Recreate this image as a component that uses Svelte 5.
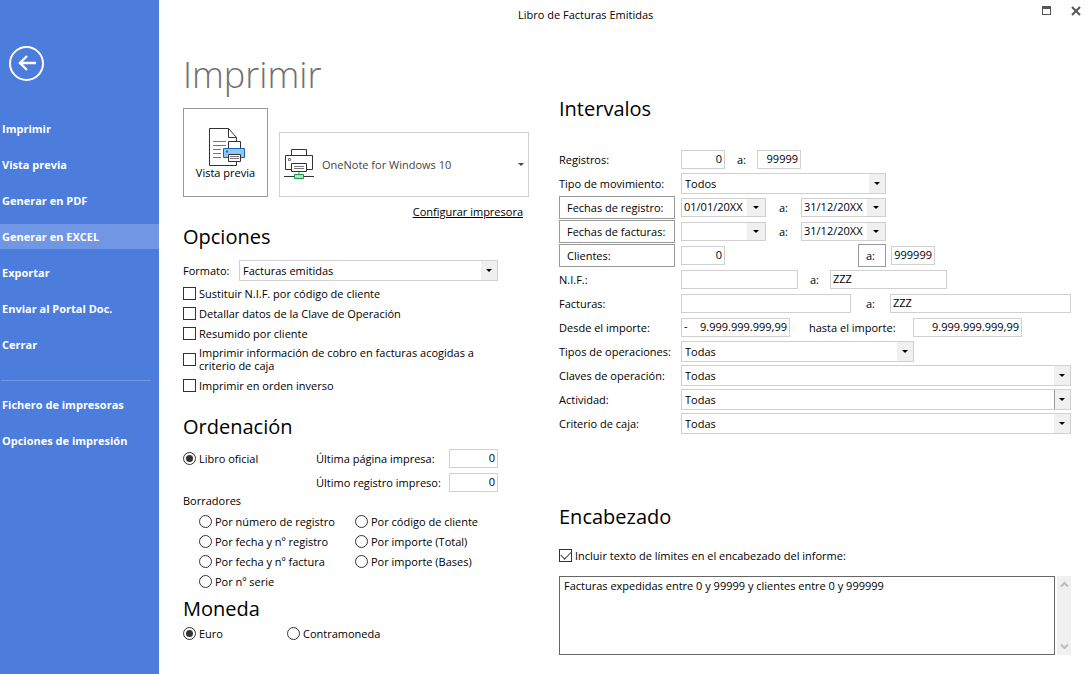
<script>
  const nav = ['Imprimir', 'Vista previa', 'Generar en PDF', 'Generar en EXCEL', 'Exportar', 'Enviar al Portal Doc.', 'Cerrar'];
  const tools = ['Fichero de impresoras', 'Opciones de impresión'];
  const active = 'Generar en EXCEL';
  const checks = [
    'Sustituir N.I.F. por código de cliente',
    'Detallar datos de la Clave de Operación',
    'Resumido por cliente',
    'Imprimir información de cobro en facturas acogidas a criterio de caja',
    'Imprimir en orden inverso'
  ];
  const drafts = [
    ['Por número de registro', 'Por código de cliente'],
    ['Por fecha y nº registro', 'Por importe (Total)'],
    ['Por fecha y nº factura', 'Por importe (Bases)'],
    ['Por nº serie']
  ];
  let order = $state('Libro oficial');
  let currency = $state('Euro');
  const lists = [
    ['claves', 'Claves de operación:'],
    ['actividad', 'Actividad:'],
    ['criterio', 'Criterio de caja:']
  ];
</script>

{#snippet date(id, label, value)}
  <span class="combo date">
    <input {id} type="text" aria-label={label} {value} />
    <button type="button" aria-label="Abrir calendario"></button>
  </span>
{/snippet}

<div class="app">
  <nav>
    <button class="back" type="button" aria-label="Volver">
      <svg width="35" height="35" viewBox="0 0 35 35" fill="none" stroke="#fff">
        <circle cx="17.5" cy="17.5" r="16.5" stroke-width="2" />
        <path d="M27 17H10M18 10L11 17L18 24" stroke-width="2.4" />
      </svg>
    </button>
    {#each nav as item}
      <button class="item" class:active={item === active} type="button">{item}</button>
    {/each}
    <hr />
    {#each tools as item}
      <button class="item" type="button">{item}</button>
    {/each}
  </nav>

  <div class="page">
    <header>
      <span class="caption">Libro de Facturas Emitidas</span>
      <button type="button" aria-label="Maximizar">
        <svg width="10" height="10" viewBox="0 0 10 10" shape-rendering="crispEdges"><path d="M.5 .5h8v8h-8z" fill="none" stroke="#555" /><path d="M0 0h9v3H0z" fill="#555" /></svg>
      </button>
      <button type="button" aria-label="Cerrar ventana">
        <svg width="10" height="10" viewBox="0 0 10 10"><path d="M1 1L9 9M9 1L1 9" stroke="#555" stroke-width="2" /></svg>
      </button>
    </header>

    <main>
      <div class="left">
        <h1>Imprimir</h1>
        <div class="printer-row">
          <button class="preview" type="button">
            <svg width="38" height="38" viewBox="-1 0 38 38" fill="none">
              <path d="M1.5 .5H20.5L28.5 9.500V37.500H1.500Z" fill="#fff" stroke="#333" />
              <path d="M20.500 .5V9.500H28.500" stroke="#333" />
              <path d="M5 13.500H18M5 17.500H18M5 21.500H13M5 25.500H13M5 29.500H13" stroke="#777" />
              <path d="M20.500 20V13.500H32.500V20" fill="#fff" stroke="#333" />
              <path d="M15.500 20.500H36.500V29.500H15.500Z" fill="#91c8f0" stroke="#1467b8" />
              <path d="M18 22.500h2v2h-2z" fill="#1467b8" />
              <path d="M20.500 26.500H32.500V33.500H20.500Z" fill="#fff" stroke="#333" />
              <path d="M22 28.500H31M22 30.500H31" stroke="#777" />
            </svg>
            <span>Vista previa</span>
          </button>
          <span class="combo printer">
            <select aria-label="Impresora"><option>OneNote for Windows 10</option></select>
            <svg width="30" height="31" viewBox="0 0 30 31" fill="none">
              <path d="M7.500 6V.5H22.500V6" stroke="#333" />
              <path d="M7 20.500H1.500V6.500H28.500V20.500H23" stroke="#333" />
              <path d="M4.500 9.500h2v2h-2z" stroke="#777" />
              <path d="M7.500 14.500H22.500V22.500H7.500Z" fill="#fff" stroke="#333" />
              <path d="M10 17.500H20M10 19.500H20M15 23V26" stroke="#777" />
              <path d="M0 27.500H30" stroke="#333" />
              <path d="M10.500 25.500H19.500V29.500H10.500Z" fill="#b5e2c0" stroke="#149a48" />
            </svg>
          </span>
        </div>
        <a class="config" href="#configurar">Configurar impresora</a>

        <h2>Opciones</h2>
        <div class="format">
          <label for="formato">Formato:</label>
          <span class="combo"><select id="formato"><option>Facturas emitidas</option></select></span>
        </div>
        <div class="checks">
          {#each checks as text}
            <label class="choice"><input type="checkbox" /><span>{text}</span></label>
          {/each}
        </div>

        <h2>Ordenación</h2>
        <div class="official">
          <label class="choice"><input type="radio" name="orden" value="Libro oficial" bind:group={order} /><span>Libro oficial</span></label>
          <label class="lbl" for="pagina">Última página impresa:</label>
          <input class="box num" id="pagina" type="text" value="0" />
          <label class="lbl second" for="registro">Último registro impreso:</label>
          <input class="box num" id="registro" type="text" value="0" />
        </div>
        <div class="drafts-title">Borradores</div>
        <div class="drafts">
          {#each drafts as pair}
            <div class="pair">
              {#each pair as text}
                <label class="choice"><input type="radio" name="orden" value={text} bind:group={order} /><span>{text}</span></label>
              {/each}
            </div>
          {/each}
        </div>

        <h2>Moneda</h2>
        <div class="currency">
          {#each ['Euro', 'Contramoneda'] as text}
            <label class="choice"><input type="radio" name="moneda" value={text} bind:group={currency} /><span>{text}</span></label>
          {/each}
        </div>
      </div>

      <div class="right">
        <h2>Intervalos</h2>
        <div class="ranges">
          <div class="row">
            <label for="reg1">Registros:</label>
            <input class="box num short" id="reg1" type="text" value="0" />
            <label class="to to-s" for="reg2">a:</label>
            <input class="box num short" id="reg2" type="text" value="99999" />
          </div>
          <div class="row">
            <label for="tipo">Tipo de movimiento:</label>
            <span class="combo medium"><select id="tipo"><option>Todos</option></select></span>
          </div>
          <div class="row">
            <button class="key" type="button">Fechas de registro:</button>
            {@render date('fr1', 'Fecha de registro desde', '01/01/20XX')}
            <label class="to to-m" for="fr2">a:</label>
            {@render date('fr2', 'Fecha de registro hasta', '31/12/20XX')}
          </div>
          <div class="row">
            <button class="key" type="button">Fechas de facturas:</button>
            {@render date('ff1', 'Fecha de factura desde', '')}
            <label class="to to-m" for="ff2">a:</label>
            {@render date('ff2', 'Fecha de factura hasta', '31/12/20XX')}
          </div>
          <div class="row">
            <button class="key" type="button">Clientes:</button>
            <span class="client-from"><input class="box num short" type="text" aria-label="Cliente desde" value="0" /></span>
            <button class="key small" type="button">a:</button>
            <input class="box num short" type="text" aria-label="Cliente hasta" value="999999" />
          </div>
          <div class="row">
            <label for="nif1">N.I.F.:</label>
            <input class="box nif" id="nif1" type="text" />
            <label class="to to-s" for="nif2">a:</label>
            <input class="box nif" id="nif2" type="text" value="ZZZ" />
          </div>
          <div class="row">
            <label for="fac1">Facturas:</label>
            <input class="box invoice" id="fac1" type="text" />
            <label class="to to-l" for="fac2">a:</label>
            <input class="box grow" id="fac2" type="text" value="ZZZ" />
          </div>
          <div class="row">
            <label for="imp1">Desde el importe:</label>
            <span class="box amount"><span>-</span><input class="num" id="imp1" type="text" value="9.999.999.999,99" /></span>
            <label class="until" for="imp2">hasta el importe:</label>
            <span class="box amount"><input class="num" id="imp2" type="text" value="9.999.999.999,99" /></span>
          </div>
          <div class="row">
            <label for="tipos">Tipos de operaciones:</label>
            <span class="combo large"><select id="tipos"><option>Todas</option></select></span>
          </div>
          {#each lists as [id, text]}
            <div class="row">
              <label for={id}>{text}</label>
              <span class="combo grow" class:split={id === 'actividad'}><select {id}><option>Todas</option></select></span>
            </div>
          {/each}
        </div>

        <h2>Encabezado</h2>
        <label class="choice include"><input type="checkbox" checked /><span>Incluir texto de límites en el encabezado del informe:</span></label>
        <div class="heading-text">
          <textarea aria-label="Texto del encabezado">Facturas expedidas entre 0 y 99999 y clientes entre 0 y 999999</textarea>
          <div class="scroll">
            <button type="button" aria-label="Subir"><svg width="9" height="7" viewBox="0 0 9 7"><path d="M1 5.500L4.500 2L8 5.500" fill="none" stroke="#bbb" stroke-width="2" /></svg></button>
            <button type="button" aria-label="Bajar"><svg width="9" height="7" viewBox="0 0 9 7"><path d="M1 1.500L4.500 5L8 1.500" fill="none" stroke="#bbb" stroke-width="2" /></svg></button>
          </div>
        </div>
      </div>
    </main>
  </div>
</div>

<style>
  :global(body) { margin: 0; background: #fff; }
  * { box-sizing: border-box; }
  .app { display: flex; min-height: 100vh; color: #000; font: 11px/13px "Open Sans", "Noto Sans", sans-serif; }
  button, input, select, textarea { font: inherit; color: inherit; margin: 0; padding: 0; border: 0; background: none; border-radius: 0; outline: 0; min-width: 0; }
  svg { display: block; }

  nav { flex: 0 0 159px; display: flex; flex-direction: column; gap: 11px; padding-top: 46px; background: #4c7cdc; color: #fff; }
  .back { align-self: flex-start; margin: 0 0 24px 9px; }
  .item { height: 25px; padding-left: 2px; text-align: left; font-weight: 700; }
  .item.active { background: #7096e4; }
  hr { width: 150px; height: 1px; margin: 12px 0 0 1px; border: 0; background: #7096e4; }

  .page { flex: 1; min-width: 0; display: flex; flex-direction: column; }
  header { display: flex; align-items: center; gap: 19px; height: 22px; padding: 0 9px 0 359px; }
  .caption { flex: 1; padding-top: 6px; }
  main { flex: 1; display: grid; grid-template-columns: minmax(0, 346fr) minmax(0, 512fr); column-gap: 30px; padding: 29px 19px 0 24px; }

  h1 { margin: 0 0 9px; font-size: 36px; line-height: 48px; font-weight: 300; color: #707070; }
  h2 { margin: 0; font-size: 20px; line-height: 28px; font-weight: 400; }

  .printer-row { display: flex; align-items: flex-end; gap: 11px; }
  .preview { width: 85px; height: 89px; padding-top: 1px; border: 1px solid #999; display: flex; flex-direction: column; align-items: center; justify-content: center; }
  .config { display: block; width: fit-content; margin: 7px 6px 3px auto; line-height: 16px; color: #000; }

  .combo { position: relative; display: flex; height: 21px; border: 1px solid #d0d0d0; background: linear-gradient(#f0f0f0, #f0f0f0) right / 16px no-repeat; }
  .combo::after { content: ""; position: absolute; right: 5px; top: 8px; border: 3px solid transparent; border-top-color: #000; border-bottom: 0; pointer-events: none; }
  .combo select { flex: 1; appearance: none; padding-left: 3px; }
  .combo.split { background: linear-gradient(90deg, #999 1px, #f0f0f0 1px) right / 16px no-repeat; }
  .combo.printer { flex: 1; height: 65px; background: none; }
  .combo.printer::after { top: 30px; right: 4px; border-top-color: #444; }
  .printer select { padding-left: 42px; color: #444; }
  .printer svg { position: absolute; left: 4px; top: 16px; pointer-events: none; }
  .combo.date { width: 85px; height: 19px; background: linear-gradient(#f0f0f0, #f0f0f0) right / 18px no-repeat; }
  .date::after { top: 7px; right: 6px; }
  .date input { flex: 1; padding: 0 0 2px 2px; }
  .date button { width: 18px; }
  .medium { width: 205px; }
  .large { width: 233px; }
  .grow { flex: 1; }

  .format { display: flex; align-items: center; margin: 9px 31px 2px 0; }
  .format label { width: 56px; }
  .format .combo { flex: 1; }

  .choice { display: flex; align-items: center; gap: 3px; min-height: 20px; }
  .choice input { appearance: none; flex: none; width: 13px; height: 13px; border: 1px solid #333; display: grid; place-items: center; }
  .choice input[type="radio"] { border-radius: 50%; }
  input[type="radio"]:checked::after { content: ""; width: 7px; height: 7px; border-radius: 50%; background: #333; }
  input[type="checkbox"]:checked::after { content: ""; width: 9px; height: 5px; border: solid #444; border-width: 0 0 1px 1px; transform: translateY(-1px) rotate(-45deg); }
  .checks { margin: 0 31px 18px 0; }
  .checks .choice:nth-child(4) { min-height: 32px; }

  .official { display: grid; grid-template-columns: 133px 133px 49px; grid-auto-rows: 24px; align-items: center; margin-top: 5px; }
  .second { grid-column: 2; }
  .box { height: 19px; border: 1px solid #d0d0d0; padding: 0 2px 2px; }
  .num { text-align: right; }
  .drafts-title { padding-bottom: 4px; }
  .drafts { margin: 0 0 4px 16px; }
  .pair { display: grid; grid-template-columns: 156px 1fr; }
  .currency { display: grid; grid-template-columns: 104px 1fr; }

  .right { padding-top: 44px; }
  .ranges { margin: 24px 0 68px; }
  .row { display: flex; align-items: center; height: 24px; }
  .row > :first-child { flex: 0 0 116px; margin-right: 6px; white-space: nowrap; }
  .key { height: 23px; padding-left: 7px; border: 1px solid #999; text-align: left; }
  .small { width: 28px; margin-right: 5px; }
  .short { width: 44px; }
  .client-from { width: 177px; display: flex; }
  .nif { width: 117px; }
  .invoice { width: 170px; }
  .amount { width: 109px; display: flex; }
  .amount input { flex: 1; }
  .to-s { width: 32px; padding-left: 12px; }
  .to-m { width: 35px; padding-left: 13px; }
  .to-l { width: 39px; padding-left: 15px; }
  .until { width: 123px; padding-left: 19px; }

  .include { margin: 14px 0 11px; }
  .heading-text { display: flex; gap: 2px; height: 79px; margin-bottom: 19px; }
  textarea { flex: 1; resize: none; padding: 2px 4px; border: 1px solid #666; overflow: hidden; }
  .scroll { width: 14px; display: flex; flex-direction: column; justify-content: space-between; align-items: center; padding: 5px 0; background: #f0f0f0; }
</style>
